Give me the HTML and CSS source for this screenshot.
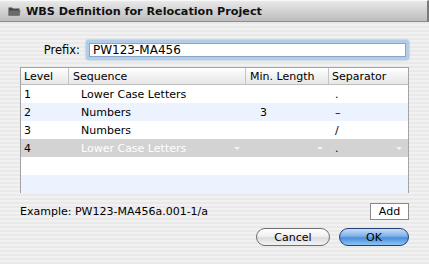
FILE: index.html
```html
<!DOCTYPE html>
<html>
<head>
  <title>WBS Definition</title>
  <meta charset="UTF-8" />
  <link rel="stylesheet" href="styles.css">
</head>
<body>
  <div class="window">
    <div class="titlebar">
      <svg class="folder" width="13" height="10" viewBox="0 0 13 10">
        <path d="M0.5 1.5 L4 1.5 L5 2.5 L11.5 2.5 L11.5 9.5 L0.5 9.5 Z" fill="#4a4a4a"/>
        <path d="M1.5 4.5 L12.5 4.5 L11.5 9.5 L0.5 9.5 Z" fill="#6b6b6b"/>
      </svg>
      <span class="title">WBS Definition for Relocation Project</span>
    </div>

    <div class="content">
      <!-- Prefix -->
      <div class="prefix-row">
        <label for="prefix">Prefix:</label>
        <div class="focus-ring">
          <input type="text" id="prefix" value="PW123-MA456" />
        </div>
      </div>

      <!-- Levels table -->
      <div class="grid">
        <div class="row head">
          <div class="cell c-level">Level</div>
          <div class="cell c-seq">Sequence</div>
          <div class="cell c-min">Min. Length</div>
          <div class="cell c-sep">Separator</div>
        </div>
        <div class="row">
          <div class="cell c-level">1</div>
          <div class="cell c-seq">Lower Case Letters</div>
          <div class="cell c-min"></div>
          <div class="cell c-sep">.</div>
        </div>
        <div class="row alt">
          <div class="cell c-level">2</div>
          <div class="cell c-seq">Numbers</div>
          <div class="cell c-min">3</div>
          <div class="cell c-sep">–</div>
        </div>
        <div class="row">
          <div class="cell c-level">3</div>
          <div class="cell c-seq">Numbers</div>
          <div class="cell c-min"></div>
          <div class="cell c-sep">/</div>
        </div>
        <div class="row selected">
          <div class="cell c-level">4</div>
          <div class="cell c-seq popup">Lower Case Letters<span class="arrow"></span></div>
          <div class="cell c-min popup"><span class="arrow"></span></div>
          <div class="cell c-sep popup">.<span class="arrow"></span></div>
        </div>
        <div class="row"></div>
        <div class="row alt"></div>
      </div>

      <div class="example-row">
        <span class="example">Example: PW123-MA456a.001-1/a</span>
        <button class="add-btn">Add</button>
      </div>

      <div class="buttons">
        <button class="pill cancel">Cancel</button>
        <button class="pill ok">OK</button>
      </div>
    </div>
  </div>
</body>
</html>
```

FILE: styles.css
```css
body {
  margin: 0;
  font-family: "DejaVu Sans", sans-serif;
  font-size: 11px;
  color: #000;
}

.window {
  width: 429px;
  height: 264px;
  overflow: hidden;
  background: repeating-linear-gradient(to bottom, #f1f1f1 0, #f1f1f1 2px, #e9e9e9 2px, #e9e9e9 4px);
}

.titlebar {
  display: flex;
  align-items: center;
  padding-left: 8px;
  background: linear-gradient(to bottom, #e9e9e9 0%, #d2d2d2 50%, #bdbdbd 100%);
  border-top: 1px solid #f8f8f8;
  border-bottom: 1px solid #8c8c8c;
  border-right: 2px solid #7a7a7a;
  box-sizing: border-box;
  height: 22px;
}

.folder {
  margin-right: 5px;
}

.title {
  font-weight: bold;
  font-size: 11.2px;
  color: #111;
}

.content {
  padding: 0 20px;
}

.prefix-row {
  display: flex;
  align-items: center;
  margin-top: 18px;
  height: 20px;
}

.prefix-row label {
  width: 66px;
  text-align: right;
  padding-right: 6px;
  box-sizing: border-box;
  font-size: 11.5px;
}

.focus-ring {
  flex: 1;
  height: 20px;
  border-radius: 3px;
  background: #b3cde9;
  box-shadow: 0 0 2px #7fa8d8;
  padding: 3px;
  box-sizing: border-box;
}

.focus-ring input {
  width: 100%;
  border: 1px solid #8aa5c6;
  box-sizing: border-box;
  padding: 0 3px;
  font-family: "DejaVu Sans", sans-serif;
  font-size: 12px;
  outline: none;
  display: block;
  height: 14px;
  line-height: 12px;
}

.grid {
  margin-top: 7px;
  border: 1px solid #a3a3a3;
  background: #fff;
  height: 126px;
  box-sizing: border-box;
}

.row {
  display: flex;
  height: 18px;
  align-items: center;
}

.row.head {
  height: 16px;
  background: linear-gradient(to bottom, #ffffff 0%, #f2f2f2 50%, #e6e6e6 100%);
  border-bottom: 1px solid #bdbdbd;
}

.row.alt {
  background: #edf3fe;
}

.row.selected {
  background: #d3d3d3;
}

.cell {
  box-sizing: border-box;
  height: 100%;
  display: flex;
  align-items: center;
  white-space: nowrap;
  position: relative;
}

.c-level { width: 48px; padding-left: 3px; }
.c-seq { width: 177px; padding-left: 12px; }
.c-min { width: 83px; padding-left: 14px; }
.c-sep { flex: 1; padding-left: 6px; }

.row.head .cell { border-right: 1px solid #c4c4c4; }
.row.head .cell:last-child { border-right: none; }
.row.head .c-seq { padding-left: 4px; }
.row.head .c-min { padding-left: 4px; }
.row.head .c-sep { padding-left: 3px; }

.row.selected .c-seq { color: #fff; }

.arrow {
  position: absolute;
  right: 6px;
  top: 8px;
  width: 0;
  height: 0;
  border-left: 3px solid transparent;
  border-right: 3px solid transparent;
  border-top: 3px solid #f4f4f4;
}

.example-row {
  display: flex;
  justify-content: space-between;
  align-items: center;
  margin-top: 10px;
  height: 17px;
}

.add-btn {
  width: 39px;
  height: 17px;
  background: #fff;
  border: 1px solid #8a8a8a;
  font-family: "DejaVu Sans", sans-serif;
  font-size: 11px;
  padding: 0;
}

.buttons {
  display: flex;
  justify-content: flex-end;
  gap: 9px;
  margin-top: 8px;
}

.pill {
  height: 18px;
  border-radius: 9px;
  font-family: "DejaVu Sans", sans-serif;
  font-size: 11px;
  padding: 0;
}

.cancel {
  width: 74px;
  border: 1px solid #6f6f6f;
  background: linear-gradient(to bottom, #ffffff 0%, #f0f0f0 45%, #dcdcdc 55%, #f3f3f3 100%);
}

.ok {
  width: 70px;
  border: 1px solid #263e78;
  background: linear-gradient(to bottom, #c8def7 0%, #7fb0e8 45%, #4b8ddc 55%, #8cc4f6 100%);
}
```
